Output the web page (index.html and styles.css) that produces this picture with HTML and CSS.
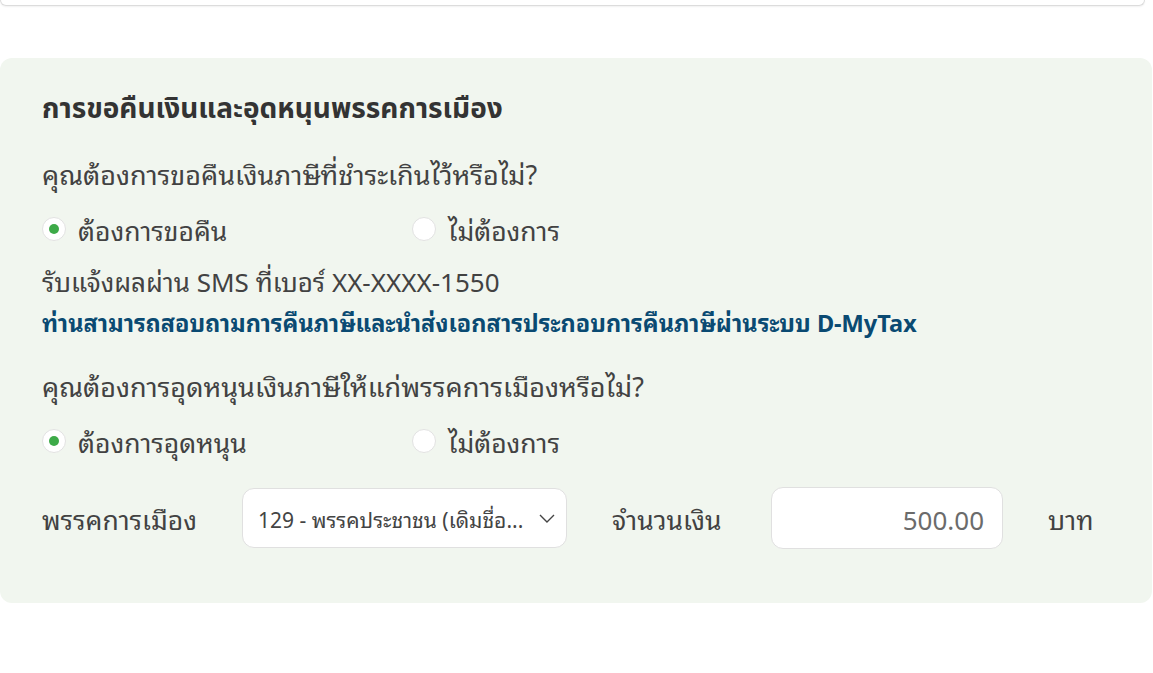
FILE: index.html
```html
<!DOCTYPE html>
<html lang="th">
<head>
  <meta charset="UTF-8">
  <title>การขอคืนเงินและอุดหนุนพรรคการเมือง</title>
  <link rel="stylesheet" href="styles.css">
</head>
<body>
  <div class="top-card"></div>

  <section class="refund-card">
    <h2 class="card-title">การขอคืนเงินและอุดหนุนพรรคการเมือง</h2>

    <p class="question">คุณต้องการขอคืนเงินภาษีที่ชำระเกินไว้หรือไม่?</p>
    <div class="radio-row">
      <label class="radio"><span class="dot checked"></span>ต้องการขอคืน</label>
      <label class="radio"><span class="dot"></span>ไม่ต้องการ</label>
    </div>
    <p class="sms">รับแจ้งผลผ่าน SMS ที่เบอร์ XX-XXXX-1550</p>
    <p class="notice">ท่านสามารถสอบถามการคืนภาษีและนำส่งเอกสารประกอบการคืนภาษีผ่านระบบ D-MyTax</p>

    <p class="question q2">คุณต้องการอุดหนุนเงินภาษีให้แก่พรรคการเมืองหรือไม่?</p>
    <div class="radio-row">
      <label class="radio"><span class="dot checked"></span>ต้องการอุดหนุน</label>
      <label class="radio"><span class="dot"></span>ไม่ต้องการ</label>
    </div>

    <div class="form-row">
      <span class="field-label party-label">พรรคการเมือง</span>
      <div class="select-box">
        <span class="select-text">129 - พรรคประชาชน (เดิมชื่อ...</span>
        <svg width="18" height="18" viewBox="0 0 18 18"><path d="M2 6l7 7 7-7" fill="none" stroke="#444" stroke-width="1.4"/></svg>
      </div>
      <span class="field-label amount-label">จำนวนเงิน</span>
      <div class="amount-box">500.00</div>
      <span class="field-label unit">บาท</span>
    </div>
  </section>
</body>
</html>
```

FILE: styles.css
```css
body {
  margin: 0;
  background: #fff;
  font-family: "Noto Sans Thai Looped", "Noto Sans Thai", "Noto Sans", sans-serif;
  color: #424242;
}
.top-card {
  height: 5px;
  margin: 0 8px 0 0;
  border: 1px solid #dcdcdc;
  border-top: none;
  border-radius: 0 0 10px 10px;
  box-shadow: 0 1px 2px rgba(0,0,0,0.06);
}
.refund-card {
  margin: 52px 1px 0 0;
  padding: 28px 42px 54px 42px;
  background: #f1f6ef;
  border-radius: 12px;
}
.card-title {
  margin: 0;
  font-family: "Noto Sans Thai", "Noto Sans", sans-serif;
  font-size: 28px;
  font-weight: 700;
  line-height: 48px;
  color: #333;
}
.question {
  margin: 19px 0 0;
  font-size: 27px;
  line-height: 40px;
}
.q2 {
  margin-top: 26px;
}
.radio-row {
  display: grid;
  grid-template-columns: 370px 1fr;
  margin-top: 16px;
}
.radio {
  display: flex;
  align-items: center;
  gap: 12px;
  font-size: 26.5px;
  line-height: 40px;
}
.dot {
  width: 24px;
  height: 24px;
  border-radius: 50%;
  background: #fff;
  border: 1px solid #e2e2e2;
  box-sizing: border-box;
  display: flex;
  align-items: center;
  justify-content: center;
}
.dot.checked::after {
  content: "";
  width: 10px;
  height: 10px;
  border-radius: 50%;
  background: #3daa48;
}
.sms {
  margin: 13px 0 0;
  font-size: 26px;
  line-height: 36px;
}
.notice {
  margin: 7px 0 0;
  font-size: 23.5px;
  font-weight: 700;
  line-height: 34px;
  color: #0a4a72;
}
.form-row {
  display: flex;
  align-items: center;
  margin-top: 26px;
}
.field-label {
  font-size: 26.5px;
  line-height: 40px;
}
.party-label {
  width: 200px;
}
.select-box {
  width: 325px;
  height: 60px;
  box-sizing: border-box;
  background: #fff;
  border: 1px solid #e0e0e0;
  border-radius: 12px;
  display: flex;
  align-items: center;
  justify-content: space-between;
  padding: 0 10px 0 15px;
}
.select-text {
  font-size: 21px;
  color: #444;
}
.amount-label {
  margin-left: 45px;
  width: 159px;
}
.amount-box {
  width: 232px;
  height: 62px;
  box-sizing: border-box;
  background: #fff;
  border: 1px solid #e0e0e0;
  border-radius: 12px;
  display: flex;
  align-items: center;
  justify-content: flex-end;
  padding: 0 18px;
  font-size: 26px;
  color: #6b6b6b;
}
.unit {
  margin-left: 45px;
}
```
